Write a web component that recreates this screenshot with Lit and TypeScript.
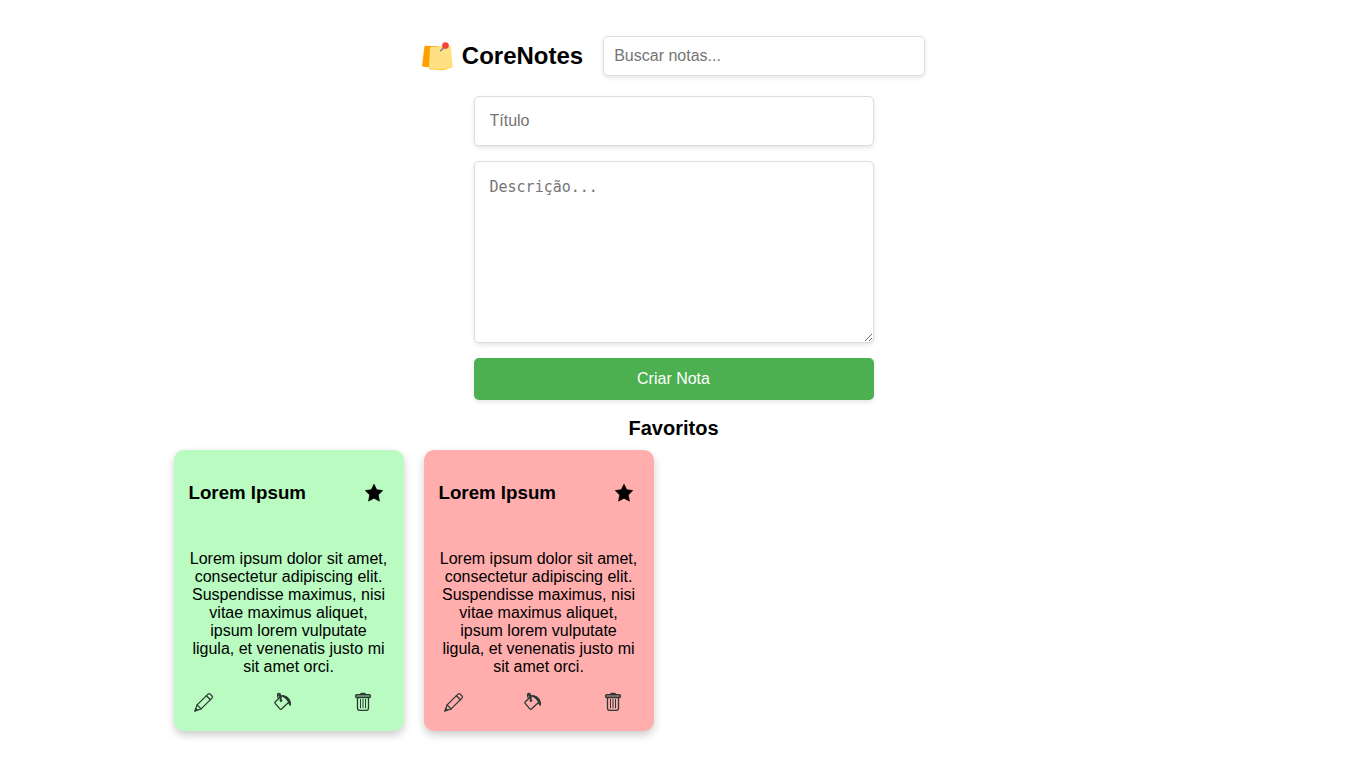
import { LitElement, html, css, svg } from "lit";
import { customElement, property, state } from "lit/decorators.js";
import { classMap } from "lit/directives/class-map.js";

interface Note {
  title: string;
  text: string;
  color: "green" | "red";
}

const LOREM =
  "Lorem ipsum dolor sit amet, consectetur adipiscing elit. Suspendisse maximus, nisi vitae maximus aliquet, ipsum lorem vulputate ligula, et venenatis justo mi sit amet orci.";

const star = svg`<path fill="#000" d="M10 1.200l2.700 5.500 6 .9-4.400 4.300 1.100 6.200L10 15.200l-5.400 2.900 1.100-6.200L1.300 7.600l6-.9z" stroke="#000" stroke-width=".7" stroke-linejoin="round"/>`;

const pencil = svg`<g fill="none" stroke="#2b3a33" stroke-width="1.300" stroke-linejoin="round" stroke-linecap="round">
  <path d="M1 19l2.100-6.100L14 2.100q1-1 2.100 0L18 4q1 1 0 2.100L7.100 16.900z"/>
  <path d="M3.100 12.900l4 4M12.400 3.700l4 4"/>
  <path d="M1 19l.8-2.300 1.500 1.500z" fill="#2b3a33"/>
</g>`;

const bucket = svg`<g fill="none" stroke="#2b3a33" stroke-width="1.300" stroke-linejoin="round" stroke-linecap="round">
  <path d="M7.500 4.700L2.100 10q-.6.700 0 1.400l4.800 5.500q.8.800 1.600.1l6.700-6.200"/>
  <path d="M7.500 9V3q-.1-1.600-1.700-1.500-1.500.2-1.300 1.700l.5 2.300M5.500 2.500l2.800 3.500"/>
  <path d="M7.500 4.500Q10 2.800 13 5.500t3.300 6"/>
  <path d="M9 3.600q5 .4 7.300 4.300 1.700 2.800 1.100 5.200-.9-.1-1.200-1.500-.8-3.400-3.600-5.700z" fill="#2b3a33"/>
  <circle cx="8" cy="8.500" r=".7" fill="#2b3a33"/>
</g>`;

const trash = svg`<g fill="none" stroke="#2b3a33" stroke-width="1.300" stroke-linejoin="round">
  <rect x="2.600" y="2.700" width="14.800" height="2.800" rx="1" fill="#2b3a33" fill-opacity=".45"/>
  <path d="M7.500 2.300q0-1 1.200-1h2.600q1.200 0 1.200 1z" fill="#2b3a33"/>
  <path d="M4.500 5.500v10.600q0 2.200 2 2.200h7q2 0 2-2.200V5.500"/>
  <path d="M7.500 7v9.300M10 7v9.300M12.500 7v9.300" stroke-width="1"/>
</g>`;

@customElement("note-card")
class NoteCard extends LitElement {
  static styles = css`
    :host {
      display: block;
      width: 230px;
    }
    .card {
      box-sizing: border-box;
      padding: 15px;
      border-radius: 10px;
      box-shadow: 0 4px 8px rgba(0, 0, 0, 0.2);
    }
    .green {
      background: #b9fbc0;
    }
    .red {
      background: #ffadad;
    }
    .head {
      display: flex;
      align-items: center;
      justify-content: space-between;
      padding: 17px 5px 18px 0;
      margin-bottom: 28px;
    }
    h3 {
      margin: 0;
      line-height: 22px;
    }
    p {
      margin: 0 0 16px;
      line-height: 18px;
      text-align: center;
    }
    .actions {
      display: flex;
      justify-content: space-between;
      padding: 0 16px 4px 5px;
    }
    .icon-btn {
      display: block;
      padding: 0;
      border: 0;
      background: none;
      cursor: pointer;
    }
    svg {
      display: block;
      width: 20px;
      height: 20px;
    }
  `;

  @property({ attribute: false }) note!: Note;

  private icon(label: string, shape: unknown) {
    return html`<button class="icon-btn" type="button" aria-label=${label}>
      <svg viewBox="0 0 20 20" aria-hidden="true">${shape}</svg>
    </button>`;
  }

  render() {
    const { title, text, color } = this.note;
    return html`
      <article class=${classMap({ card: true, [color]: true })}>
        <div class="head">
          <h3>${title}</h3>
          ${this.icon("Favoritar", star)}
        </div>
        <p>${text}</p>
        <div class="actions">
          ${this.icon("Editar", pencil)}
          ${this.icon("Mudar cor", bucket)}
          ${this.icon("Excluir", trash)}
        </div>
      </article>
    `;
  }
}

@customElement("app-root")
class AppRoot extends LitElement {
  static styles = css`
    :host {
      display: block;
      padding: 36px 12px 36px 0;
      font: 16px "Liberation Sans", Arial, sans-serif;
      color: #000;
      background: #fff;
    }
    header {
      display: flex;
      flex-wrap: wrap;
      align-items: center;
      justify-content: center;
      gap: 20px;
      margin-bottom: 20px;
    }
    .brand {
      display: flex;
      align-items: center;
      gap: 8px;
    }
    .logo {
      width: 32px;
      height: 32px;
    }
    h1 {
      margin: 0;
      font-size: 24px;
      line-height: 28px;
    }
    .field {
      box-sizing: border-box;
      border: 1px solid #ddd;
      border-radius: 5px;
      background: #fff;
      box-shadow: 0 2px 4px rgba(0, 0, 0, 0.1);
      font: 16px "Liberation Sans", Arial, sans-serif;
    }
    .field::placeholder {
      color: #757575;
    }
    .search {
      width: 322px;
      height: 40px;
      padding: 10px;
    }
    form {
      display: flex;
      flex-direction: column;
      gap: 15px;
      max-width: 400px;
      margin: 0 auto;
    }
    .title {
      height: 50px;
      padding: 15px;
    }
    .text {
      height: 182px;
      padding: 15px;
      font: 15px/20px "DejaVu Sans Mono", Consolas, monospace;
      resize: both;
    }
    .submit {
      height: 42px;
      padding: 0 15px;
      border: 0;
      border-radius: 5px;
      background: #4caf50;
      color: #fff;
      font: 16px "Liberation Sans", Arial, sans-serif;
      box-shadow: 0 2px 4px rgba(0, 0, 0, 0.1);
      cursor: pointer;
    }
    h2 {
      margin: 16px 0 10px;
      font-size: 20px;
      line-height: 24px;
      text-align: center;
    }
    .notes {
      display: flex;
      flex-wrap: wrap;
      gap: 20px;
      max-width: 1000px;
      margin: 0 auto;
    }
  `;

  @state() private query = "";

  private notes: Note[] = [
    { title: "Lorem Ipsum", text: LOREM, color: "green" },
    { title: "Lorem Ipsum", text: LOREM, color: "red" },
  ];

  private onSearch(e: Event) {
    this.query = (e.target as HTMLInputElement).value.toLowerCase();
  }

  render() {
    const visible = this.notes.filter((n) =>
      (n.title + " " + n.text).toLowerCase().includes(this.query)
    );
    return html`
      <header>
        <div class="brand">
          <svg class="logo" viewBox="0 0 32 32" aria-hidden="true">
            <path fill="#ffa000" d="M2.500 5.700L20 6.500 18 28.500 0 26.500z" />
            <path fill="#ffe082" d="M8 7.200L28.700 5.500l2 21.200-10 3.300-13.700-1z" />
            <path fill="#ffca28" d="M7 28.600l13.700.6 10-2.800v.6l-9.500 3.200-14.200-1z" />
            <path stroke="#78909c" stroke-width="1.800" stroke-linecap="round" d="M23 6.500L18.700 10.600" />
            <circle cx="23.500" cy="5.600" r="3.300" fill="#f44336" />
          </svg>
          <h1>CoreNotes</h1>
        </div>
        <input
          class="field search"
          type="text"
          aria-label="Buscar notas"
          placeholder="Buscar notas..."
          @input=${this.onSearch}
        />
      </header>
      <main>
        <form @submit=${(e: Event) => e.preventDefault()}>
          <input class="field title" type="text" aria-label="Título" placeholder="Título" />
          <textarea class="field text" aria-label="Descrição" placeholder="Descrição..."></textarea>
          <button class="submit" type="submit">Criar Nota</button>
        </form>
        <h2>Favoritos</h2>
        <section class="notes">
          ${visible.map((n) => html`<note-card .note=${n}></note-card>`)}
        </section>
      </main>
    `;
  }
}
